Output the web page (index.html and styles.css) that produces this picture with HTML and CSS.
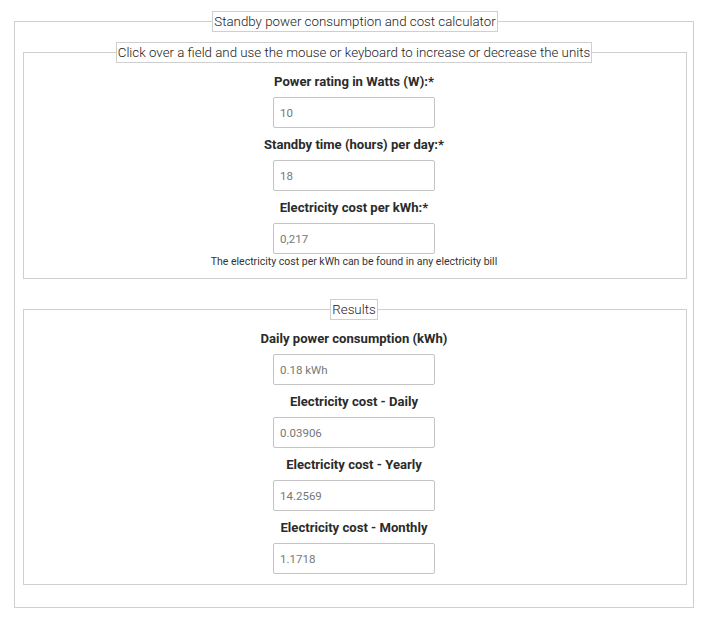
FILE: index.html
```html
<!DOCTYPE html>
<html lang="en">
<head>
    <meta charset="UTF-8">
    <meta name="viewport" content="width=device-width, initial-scale=1.0">
    <title>Standby power consumption and cost calculator</title>

    <link rel="stylesheet" href="styles.css">
</head>
<body>
    <form class="calculator">
        <fieldset class="outer">
            <legend>Standby power consumption and cost calculator</legend>

            <fieldset class="group">
                <legend>Click over a field and use the mouse or keyboard to increase or decrease the units</legend>
                <div class="field">
                    <label for="watts">Power rating in Watts (W):*</label>
                    <input id="watts" type="text" class="box" value="10">
                </div>
                <div class="field">
                    <label for="hours">Standby time (hours) per day:*</label>
                    <input id="hours" type="text" class="box" value="18">
                </div>
                <div class="field">
                    <label for="cost">Electricity cost per kWh:*</label>
                    <input id="cost" type="text" class="box" value="0,217">
                    <p class="note">The electricity cost per kWh can be found in any electricity bill</p>
                </div>
            </fieldset>

            <fieldset class="group results">
                <legend>Results</legend>
                <div class="field">
                    <label for="daily-kwh">Daily power consumption (kWh)</label>
                    <input id="daily-kwh" type="text" class="box" value="0.18 kWh" readonly>
                </div>
                <div class="field">
                    <label for="cost-daily">Electricity cost - Daily</label>
                    <input id="cost-daily" type="text" class="box" value="0.03906" readonly>
                </div>
                <div class="field">
                    <label for="cost-yearly">Electricity cost - Yearly</label>
                    <input id="cost-yearly" type="text" class="box" value="14.2569" readonly>
                </div>
                <div class="field">
                    <label for="cost-monthly">Electricity cost - Monthly</label>
                    <input id="cost-monthly" type="text" class="box" value="1.1718" readonly>
                </div>
            </fieldset>
        </fieldset>
    </form>
</body>
</html>
```

FILE: styles.css
```css
body {
    margin: 0;
    font-family: Roboto, "Liberation Sans", sans-serif;
    color: #333;
    background-color: white;
}

.calculator {
    padding: 11px 0 0 14px;
}

fieldset {
    border: 1px solid #cfcfcf;
    margin: 0;
    min-width: 0;
}

legend {
    margin: 0 auto;
    padding: 1px 1px;
    border: 1px solid #cfcfcf;
    font-size: 13.3px;
    font-weight: 300;
    line-height: 17px;
    color: #222;
}

.outer {
    width: 680px;
    box-sizing: border-box;
    padding: 0 6px 22px 8px;
}

.group {
    width: 664px;
    box-sizing: border-box;
    margin-top: 10px;
    padding: 0 2px 10px 0;
}

.results {
    margin-top: 20px;
}

.field {
    display: flex;
    flex-direction: column;
    align-items: center;
}

.field:first-of-type {
    margin-top: 2px;
}

label {
    font-size: 13.1px;
    font-weight: 700;
    line-height: 20px;
    margin-top: 7px;
    color: #2b2b2b;
}

.box {
    width: 162px;
    height: 31px;
    box-sizing: border-box;
    margin-top: 5px;
    padding: 0 6px;
    border: 1px solid #c4c4c4;
    border-radius: 2px;
    font-family: Roboto, "Liberation Sans", sans-serif;
    font-size: 11.5px;
    font-weight: 400;
    color: #777;
    outline: none;
}

.note {
    margin: 1px 0 0;
    font-size: 10.5px;
    font-weight: 400;
    line-height: 13px;
    color: #333;
}
```
